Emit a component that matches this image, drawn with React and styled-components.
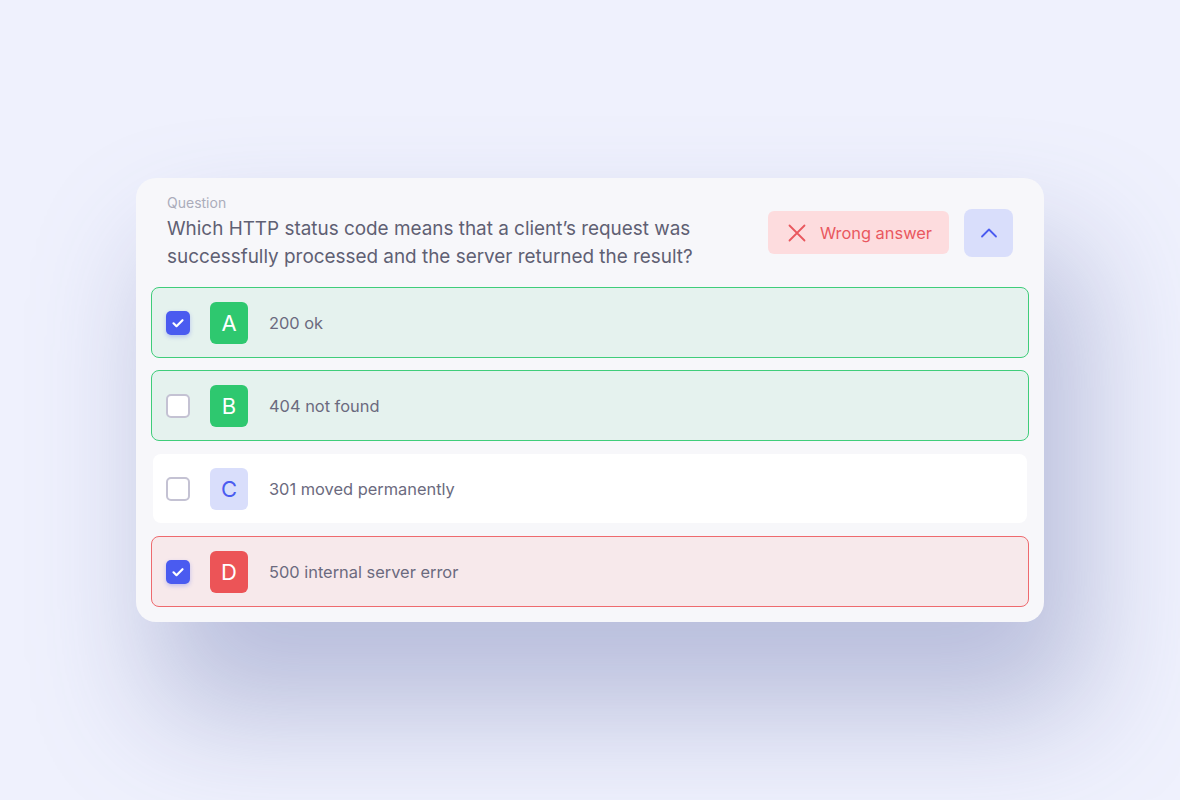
import styled, { createGlobalStyle } from 'styled-components';

const GlobalStyle = createGlobalStyle`
  * { box-sizing: border-box; }
  body {
    margin: 0;
    background: #eff1fd;
    font-family: Inter, "Noto Sans", sans-serif;
  }
`;

const Frame = styled.div`
  width: 1180px;
  height: 800px;
  padding: 178px 0 0 136px;
  overflow: hidden;
  border-bottom-right-radius: 36px;
  background: #eff1fd;
`;

const Card = styled.div`
  width: 908px;
  padding: 16px 15px 15px;
  border-radius: 20px;
  background: #f7f7fa;
  box-shadow: 30px 80px 120px 10px rgba(120, 128, 180, 0.45);
  display: flex;
  flex-direction: column;
  gap: 16px;
`;

const Header = styled.div`
  display: flex;
  align-items: center;
  padding: 0 16px;
`;

const QuestionBlock = styled.div`
  flex: 1;
`;

const Label = styled.div`
  font-size: 14px;
  line-height: 18px;
  color: #abacba;
`;

const QuestionText = styled.div`
  max-width: 580px;
  margin-top: 3px;
  font-size: 18.9px;
  line-height: 28px;
  color: #5f6073;
`;

const WrongBadge = styled.div`
  display: flex;
  align-items: center;
  gap: 14px;
  height: 43px;
  padding: 0 17px 0 20px;
  border-radius: 6px;
  background: #fddcde;
  color: #e9585e;
  font-size: 16.4px;
`;

const ToggleButton = styled.button`
  width: 49px;
  height: 48px;
  margin-left: 15px;
  border: none;
  border-radius: 8px;
  background: #d9defb;
  display: flex;
  align-items: center;
  justify-content: center;
  padding: 0;
`;

const Options = styled.div`
  display: flex;
  flex-direction: column;
  gap: 12px;
`;

const variants = {
  correct: { bg: '#e5f2ee', border: '#3fcd7a' },
  wrong: { bg: '#f7e9eb', border: '#ee6a6e' },
  plain: { bg: '#ffffff', border: 'transparent' },
};

const OptionRow = styled.div`
  height: ${(p) => (p.$state === 'plain' ? '69px' : '71px')};
  margin: ${(p) => (p.$state === 'plain' ? '1px 2px' : '0')};
  display: flex;
  align-items: center;
  padding: 0 ${(p) => (p.$state === 'plain' ? '13px' : '14px')};
  border: ${(p) => (p.$state === 'plain' ? '0' : '1.5px solid')};
  border-color: ${(p) => variants[p.$state].border};
  border-radius: 8px;
  background: ${(p) => variants[p.$state].bg};
`;

const Checkbox = styled.div`
  width: 24px;
  height: 24px;
  border-radius: 5px;
  flex-shrink: 0;
  display: flex;
  align-items: center;
  justify-content: center;
  background: ${(p) => (p.$checked ? '#4a5bf0' : '#ffffff')};
  border: ${(p) => (p.$checked ? 'none' : '2px solid #c4c2d3')};
  box-shadow: ${(p) => (p.$checked ? '0 2px 4px rgba(74, 91, 240, 0.3)' : 'none')};
`;

const letterColors = {
  correct: { bg: '#2ec86f', fg: '#ffffff' },
  wrong: { bg: '#ec5457', fg: '#ffffff' },
  plain: { bg: '#d9defb', fg: '#4a5bf0' },
};

const Letter = styled.div`
  width: 38px;
  height: 42px;
  margin-left: 20px;
  border-radius: 6px;
  flex-shrink: 0;
  display: flex;
  align-items: center;
  justify-content: center;
  font-size: 22px;
  background: ${(p) => letterColors[p.$state].bg};
  color: ${(p) => letterColors[p.$state].fg};
`;

const OptionText = styled.span`
  margin-left: 21px;
  font-size: 16.4px;
  color: #6b6a7e;
`;

const options = [
  { letter: 'A', text: '200 ok', state: 'correct', checked: true },
  { letter: 'B', text: '404 not found', state: 'correct', checked: false },
  { letter: 'C', text: '301 moved permanently', state: 'plain', checked: false },
  { letter: 'D', text: '500 internal server error', state: 'wrong', checked: true },
];

const CheckMark = () => (
  <svg width="14" height="14" viewBox="0 0 14 14" fill="none">
    <path d="M2.5 7.3l3 2.9 6-6" stroke="#fff" strokeWidth="2.2" strokeLinecap="round" strokeLinejoin="round" />
  </svg>
);

const CrossIcon = () => (
  <svg width="18" height="18" viewBox="0 0 18 18" fill="none">
    <path d="M1.5 1.5l15 15M16.5 1.5l-15 15" stroke="#e9585e" strokeWidth="1.8" strokeLinecap="round" />
  </svg>
);

const ChevronUp = () => (
  <svg width="18" height="10" viewBox="0 0 18 10" fill="none">
    <path d="M2 8.5l7-7 7 7" stroke="#4a5bf0" strokeWidth="1.8" strokeLinecap="round" strokeLinejoin="round" />
  </svg>
);

export default function App() {
  return (
    <>
      <GlobalStyle />
      <Frame>
        <Card>
          <Header>
            <QuestionBlock>
              <Label>Question</Label>
              <QuestionText>
                Which HTTP status code means that a client’s request was successfully processed and the
                server returned the result?
              </QuestionText>
            </QuestionBlock>
            <WrongBadge>
              <CrossIcon />
              Wrong answer
            </WrongBadge>
            <ToggleButton>
              <ChevronUp />
            </ToggleButton>
          </Header>
          <Options>
            {options.map((o) => (
              <OptionRow key={o.letter} $state={o.state}>
                <Checkbox $checked={o.checked}>{o.checked && <CheckMark />}</Checkbox>
                <Letter $state={o.state}>{o.letter}</Letter>
                <OptionText>{o.text}</OptionText>
              </OptionRow>
            ))}
          </Options>
        </Card>
      </Frame>
    </>
  );
}
